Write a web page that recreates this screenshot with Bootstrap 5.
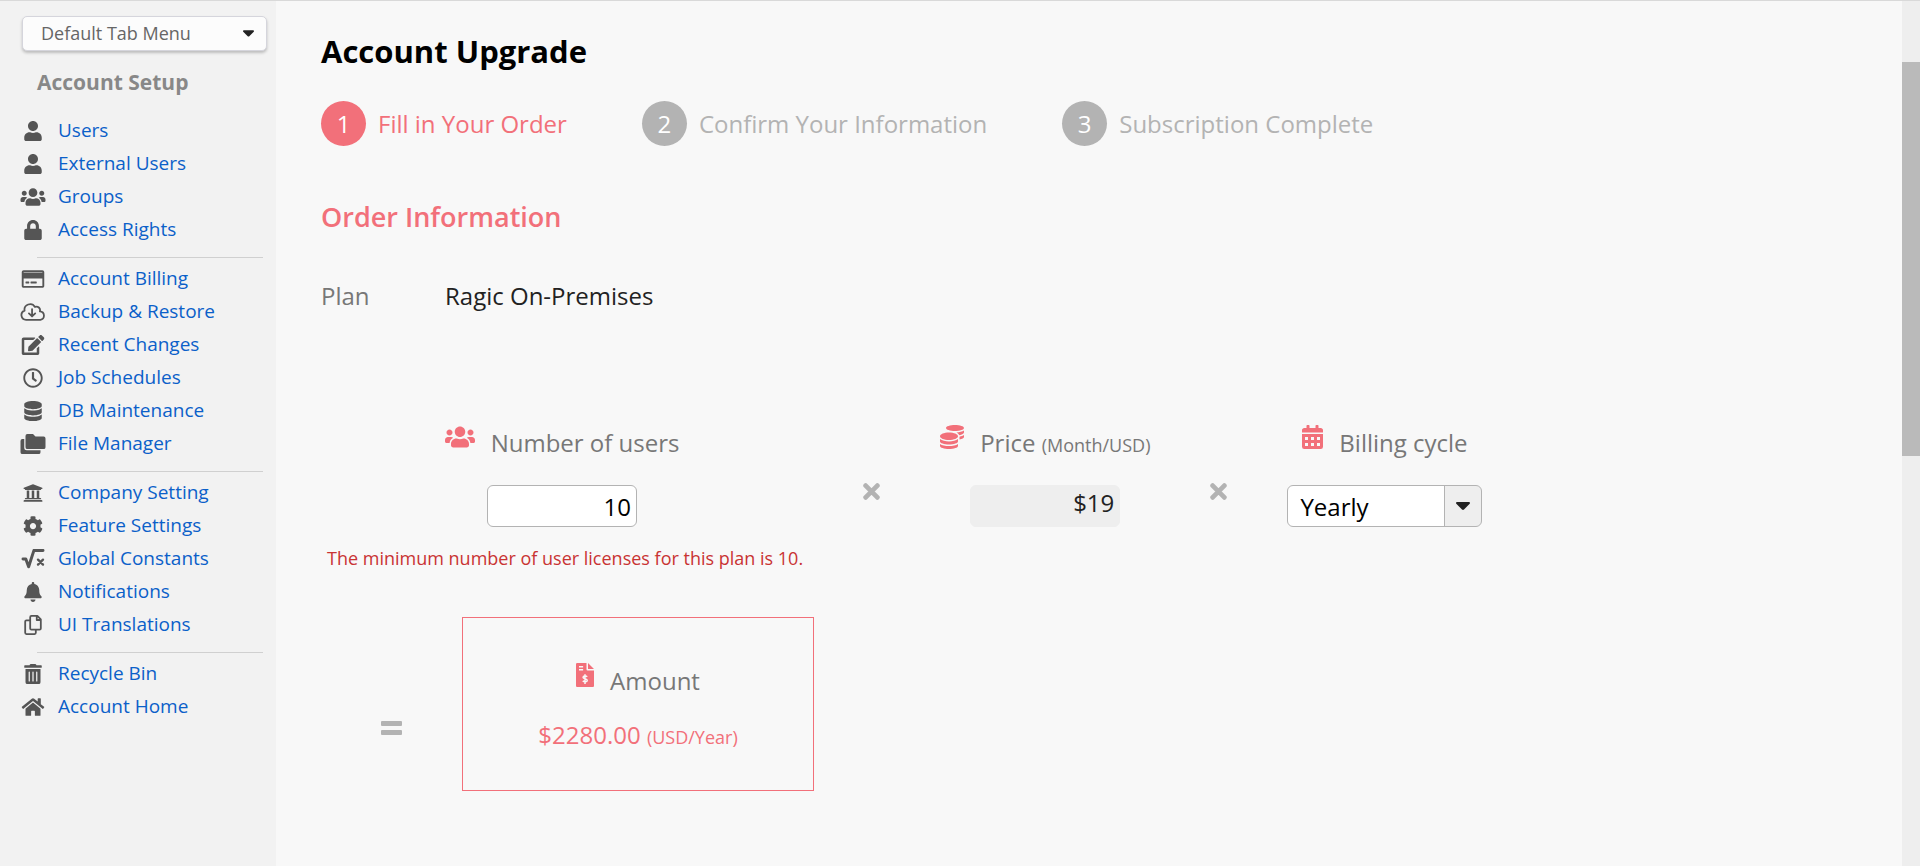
<!DOCTYPE html>
<html lang="en">
<head>
<meta charset="utf-8">
<meta name="viewport" content="width=device-width, initial-scale=1">
<title>Account Upgrade</title>
<link href="https://cdn.jsdelivr.net/npm/bootstrap@5.3.0/dist/css/bootstrap.min.css" rel="stylesheet">
<style>
  :root { --accent: #f2707a; --muted: #b3b3b3; }
  body { font-family: "Open Sans", "Noto Sans", sans-serif; font-weight: 400; font-size: 24px; line-height: 33px; background: #f8f8f8; color: #222; }
  svg { fill: currentColor; flex: none; }
  .page { min-height: 100vh; border-top: 1px solid #d9d9d9; }
  .side { width: 276px; background: #f2f2f2; padding: 15px 9px 0 22px; font-size: 19px; }
  .tab-menu { width: 245px; height: 35px; padding: 0 18px; font-size: 18px; line-height: 27px; font-weight: 400; color: #666; background: #fcfcfc; border: 1px solid #d5d5dc; border-radius: 5px; box-shadow: 0 2px 3px rgba(0,0,0,.22); appearance: none; }
  .overlay-arrow { position: absolute; pointer-events: none; color: #222; }
  .tab-wrap .overlay-arrow { right: 13px; top: 14px; }
  .side h2 { font-size: 21px; line-height: 33px; font-weight: 700; color: #888; margin: 15px 0 15px 15px; }
  .side hr { margin: 11px 4px 4px 15px; border-top: 1px solid #d0d0d0; opacity: 1; }
  .side a { color: #0b60c9; text-decoration: none; height: 33px; }
  .side .ico { width: 26px; height: 20px; color: #555; margin: 0 12px 0 -2px; }
  .content { padding: 30px 45px 40px; }
  h1 { font-size: 31px; line-height: 40px; font-weight: 700; color: #000; margin: 0 0 30px; }
  .step-list { gap: 20px 75px; color: var(--muted); }
  .step-dot { width: 45px; height: 45px; border-radius: 50%; background: var(--muted); color: #fff; }
  .current { color: var(--accent); }
  .current .step-dot { background: var(--accent); }
  .order-title { font-size: 27px; line-height: 40px; font-weight: 600; color: var(--accent); margin: 51px 0 42px; }
  .grey { color: #777; }
  .plan-label { width: 124px; }
  .formula { column-gap: 60px; margin-top: 113px; }
  .caption { font-size: 24px; color: #777; gap: 16px; }
  .caption svg { color: var(--accent); margin-bottom: 10px; }
  .unit { font-size: 18px; line-height: 1; }
  .value-box { width: 150px; height: 42px; margin-top: 26px; padding: 0 5px; font-size: 24px; text-align: right; border: 1px solid #b3b3b3; border-radius: 6px; background: #fff; color: #000; }
  .fixed-value { border-color: #eee; background: #eee; color: #222; line-height: 34px; display: block; }
  .cycle-wrap { margin-top: 26px; }
  .cycle { width: 195px; height: 42px; padding: 0 12px; font-size: 24px; color: #000; border: 1px solid #b3b3b3; border-radius: 6px; appearance: none; background: linear-gradient(#b3b3b3, #b3b3b3) right 36px top / 1px 100% no-repeat, linear-gradient(#eee, #eee) right / 36px 100% no-repeat #fff; }
  .cycle-wrap .overlay-arrow { right: 12px; top: 17px; }
  .hint { font-size: 18px; line-height: 25px; color: #c93333; padding: 19px 0 0 6px; }
  .operator { color: var(--muted); margin-top: 58px; }
  .amount-row { gap: 60px; padding-left: 60px; margin-top: 46px; }
  .amount { width: 352px; border: 1px solid var(--accent); padding: 45px 0 39px; }
  .amount .total { color: var(--accent); margin-top: 21px; }
  .equals { margin-top: 47px; color: var(--muted); }
  .scroll-track { width: 18px; background: #eee; padding-top: 61px; }
  .scroll-thumb { height: 394px; background: #bababa; }
</style>
</head>
<body>
<svg width="0" height="0" class="d-none" aria-hidden="true">
  <symbol id="user" viewBox="0 0 448 512"><path d="M224 256c70.700 0 128-57.300 128-128S294.700 0 224 0 96 57.300 96 128s57.300 128 128 128zm89.600 32h-16.700c-22.200 10.200-46.900 16-72.900 16s-50.600-5.800-72.900-16h-16.700C60.200 288 0 348.200 0 422.400V464c0 26.500 21.500 48 48 48h352c26.500 0 48-21.500 48-48v-41.600c0-74.200-60.200-134.400-134.400-134.400z"/></symbol>
  <symbol id="users" viewBox="0 0 640 512"><path d="M96 224c35.300 0 64-28.700 64-64s-28.700-64-64-64-64 28.700-64 64 28.700 64 64 64zm448 0c35.300 0 64-28.700 64-64s-28.700-64-64-64-64 28.700-64 64 28.700 64 64 64zm32 32h-64c-17.600 0-33.500 7.100-45.100 18.600 40.300 22.100 68.900 62 75.100 109.400h66c17.700 0 32-14.300 32-32v-32c0-35.300-28.700-64-64-64zm-256 0c61.900 0 112-50.100 112-112S381.900 32 320 32 208 82.100 208 144s50.100 112 112 112zm76.800 32h-8.300c-20.800 10-43.900 16-68.500 16s-47.600-6-68.500-16h-8.300C179.600 288 128 339.600 128 403.200V432c0 26.500 21.500 48 48 48h288c26.500 0 48-21.500 48-48v-28.800c0-63.600-51.600-115.200-115.200-115.200zm-223.700-13.400C161.500 263.100 145.600 256 128 256H64c-35.300 0-64 28.700-64 64v32c0 17.700 14.300 32 32 32h65.900c6.300-47.400 34.900-87.300 75.200-109.400z"/></symbol>
  <symbol id="lock" viewBox="0 0 448 512"><path d="M400 224h-24v-72C376 68.200 307.800 0 224 0S72 68.200 72 152v72H48c-26.500 0-48 21.500-48 48v192c0 26.500 21.500 48 48 48h352c26.500 0 48-21.500 48-48V272c0-26.500-21.500-48-48-48zm-104 0H152v-72c0-39.700 32.300-72 72-72s72 32.300 72 72v72z"/></symbol>
  <symbol id="card-ico" viewBox="0 0 576 512"><path d="M528 32H48C21.500 32 0 53.500 0 80v352c0 26.500 21.500 48 48 48h480c26.500 0 48-21.500 48-48V80c0-26.500-21.500-48-48-48zM54 80h468c3 0 6 3 6 6v10H48V86c0-3 3-6 6-6zm468 352H54c-3 0-6-3-6-6V240h480v186c0 3-3 6-6 6zM192 332v28c0 7-5 12-12 12h-72c-7 0-12-5-12-12v-28c0-7 5-12 12-12h72c7 0 12 5 12 12zm192 0v28c0 7-5 12-12 12H236c-7 0-12-5-12-12v-28c0-7 5-12 12-12h136c7 0 12 5 12 12z"/></symbol>
  <symbol id="cloud" viewBox="0 0 640 512"><path d="M144 456a120 120 0 0 1-40-233A144 144 0 0 1 370 126a92 92 0 0 1 126 112A110 110 0 0 1 510 456zM296 180v180M216 290l80 80 80-80" fill="none" stroke="currentColor" stroke-width="46" stroke-linecap="round" stroke-linejoin="round"/></symbol>
  <symbol id="edit" viewBox="0 0 576 512"><path d="M402.600 83.200l90.200 90.200c3.800 3.800 3.800 10 0 13.800L274.400 405.600l-92.800 10.300c-12.400 1.400-22.900-9.100-21.500-21.500l10.300-92.800L388.800 83.200c3.800-3.800 10-3.800 13.800 0zm162-22.900l-48.800-48.800c-15.200-15.200-39.900-15.200-55.200 0l-35.400 35.400c-3.800 3.800-3.800 10 0 13.800l90.200 90.200c3.800 3.800 10 3.800 13.800 0l35.400-35.400c15.200-15.300 15.200-40 0-55.200zM384 346.200V448H64V128h229.800c3.200 0 6.200-1.300 8.500-3.500l40-40c7.600-7.600 2.200-20.500-8.500-20.500H48C21.500 64 0 85.500 0 112v352c0 26.500 21.500 48 48 48h352c26.500 0 48-21.500 48-48V306.200c0-10.700-12.900-16-20.500-8.500l-40 40c-2.200 2.300-3.500 5.300-3.500 8.500z"/></symbol>
  <symbol id="clock" viewBox="0 0 512 512"><path d="M256 8C119 8 8 119 8 256s111 248 248 248 248-111 248-248S393 8 256 8zm0 448c-110.500 0-200-89.500-200-200S145.500 56 256 56s200 89.500 200 200-89.500 200-200 200zm61.800-104.400l-84.900-61.700c-3.100-2.300-4.900-5.900-4.900-9.700V116c0-6.600 5.400-12 12-12h32c6.600 0 12 5.400 12 12v141.700l66.800 48.600c5.400 3.900 6.500 11.400 2.600 16.800L334.600 349c-3.900 5.300-11.400 6.500-16.800 2.600z"/></symbol>
  <symbol id="database" viewBox="0 0 448 512"><path d="M448 80v48c0 44.200-100.300 80-224 80S0 172.200 0 128V80C0 35.800 100.300 0 224 0S448 35.800 448 80zM393.200 214.700c20.800-7.400 39.900-16.900 54.800-28.600V288c0 44.200-100.300 80-224 80S0 332.200 0 288V186.100c14.900 11.800 34 21.200 54.800 28.600C99.700 230.700 159.500 240 224 240s124.300-9.300 169.200-25.300zM0 346.100c14.900 11.800 34 21.200 54.800 28.600C99.700 390.700 159.500 400 224 400s124.300-9.300 169.200-25.300c20.800-7.400 39.900-16.900 54.800-28.600V432c0 44.200-100.300 80-224 80S0 476.200 0 432V346.100z"/></symbol>
  <symbol id="folders" viewBox="0 0 640 512"><path d="M176 0h144l64 64h208a48 48 0 0 1 48 48v224a48 48 0 0 1-48 48H176a48 48 0 0 1-48-48V48a48 48 0 0 1 48-48zM96 128v224a64 64 0 0 0 64 64h352v48a48 48 0 0 1-48 48H48a48 48 0 0 1-48-48V176a48 48 0 0 1 48-48z"/></symbol>
  <symbol id="bank" viewBox="0 0 512 512"><path d="M496 128v16a8 8 0 0 1-8 8h-24v12a12 12 0 0 1-12 12H60a12 12 0 0 1-12-12v-12H24a8 8 0 0 1-8-8v-16a8 8 0 0 1 5-7.400l232-88a8 8 0 0 1 6 0l232 88A8 8 0 0 1 496 128zM472 432H40a24 24 0 0 0-24 24v16a8 8 0 0 0 8 8h464a8 8 0 0 0 8-8v-16a24 24 0 0 0-24-24zM96 192v192H60a12 12 0 0 0-12 12v20h416v-20a12 12 0 0 0-12-12h-36V192h-64v192h-64V192h-64v192h-64V192z"/></symbol>
  <symbol id="gear" viewBox="0 0 512 512"><path d="M487.400 315.700l-42.600-24.600c4.300-23.200 4.300-47 0-70.200l42.600-24.600c4.900-2.800 7.100-8.600 5.500-14-11.100-35.600-30-67.800-54.700-94.600-3.800-4.100-10-5.100-14.800-2.300L380.800 110c-17.900-15.400-38.500-27.300-60.800-35.100V25.800c0-5.600-3.900-10.500-9.400-11.700-36.700-8.200-74.300-7.800-109.200 0-5.500 1.200-9.400 6.100-9.400 11.700V75c-22.200 7.900-42.800 19.800-60.800 35.100L88.700 85.500c-4.900-2.800-11-1.900-14.800 2.300-24.700 26.700-43.600 58.900-54.700 94.600-1.700 5.400.6 11.200 5.500 14L67.300 221c-4.300 23.200-4.300 47 0 70.200l-42.600 24.600c-4.900 2.800-7.100 8.600-5.500 14 11.100 35.600 30 67.800 54.700 94.600 3.800 4.100 10 5.100 14.800 2.300l42.600-24.600c17.900 15.400 38.500 27.300 60.800 35.100v49.200c0 5.600 3.900 10.500 9.400 11.700 36.700 8.200 74.300 7.800 109.200 0 5.500-1.200 9.400-6.100 9.400-11.700v-49.200c22.200-7.900 42.800-19.800 60.800-35.100l42.600 24.600c4.900 2.800 11 1.900 14.800-2.300 24.700-26.700 43.600-58.900 54.700-94.600 1.500-5.500-.7-11.300-5.600-14.100zM256 336c-44.100 0-80-35.900-80-80s35.900-80 80-80 80 35.900 80 80-35.900 80-80 80z"/></symbol>
  <symbol id="root" viewBox="0 0 576 512"><path d="M32 256h72l72 200L312 36h232" fill="none" stroke="currentColor" stroke-width="76" stroke-linecap="round" stroke-linejoin="round"/><path d="M416 272l128 128M544 272L416 400" fill="none" stroke="currentColor" stroke-width="60" stroke-linecap="round"/></symbol>
  <symbol id="bell" viewBox="0 0 448 512"><path d="M224 512c35 0 64-29 64-64H160c0 35 29 64 64 64zm215-150c-19-21-55-52-55-154 0-78-54-140-128-155V32c0-18-14-32-32-32s-32 14-32 32v21C118 68 64 130 64 208c0 102-36 133-55 154-6 6-9 14-9 22 0 16 13 32 32 32h384c19 0 32-16 32-32 0-8-3-16-9-22z"/></symbol>
  <symbol id="copy" viewBox="0 0 448 512"><path d="M184 24h152l88 88v232a32 32 0 0 1-32 32H184a32 32 0 0 1-32-32V56a32 32 0 0 1 32-32zM320 32v96h96M140 136H56a32 32 0 0 0-32 32v288a32 32 0 0 0 32 32h208a32 32 0 0 0 32-32v-70" fill="none" stroke="currentColor" stroke-width="46" stroke-linejoin="round"/></symbol>
  <symbol id="trash" viewBox="0 0 448 512"><path d="M32 464a48 48 0 0 0 48 48h288a48 48 0 0 0 48-48V128H32zm272-256a16 16 0 0 1 32 0v224a16 16 0 0 1-32 0zm-96 0a16 16 0 0 1 32 0v224a16 16 0 0 1-32 0zm-96 0a16 16 0 0 1 32 0v224a16 16 0 0 1-32 0zM432 32H312l-9-19A24 24 0 0 0 281 0H167a24 24 0 0 0-22 13L136 32H16A16 16 0 0 0 0 48v32a16 16 0 0 0 16 16h416a16 16 0 0 0 16-16V48a16 16 0 0 0-16-16z"/></symbol>
  <symbol id="home" viewBox="0 0 576 512"><path d="M280 148L96 300v164a16 16 0 0 0 16 16h112a16 16 0 0 0 16-16v-96a16 16 0 0 1 16-16h64a16 16 0 0 1 16 16v96a16 16 0 0 0 16 16h112a16 16 0 0 0 16-16V300L296 148a12 12 0 0 0-16 0zM572 251l-84-68V44a12 12 0 0 0-12-12h-56a12 12 0 0 0-12 12v73L318 43a48 48 0 0 0-61 0L4 251a12 12 0 0 0-1 17l25 31a12 12 0 0 0 17 2l235-194a12 12 0 0 1 16 0l235 194a12 12 0 0 0 17-2l25-31a12 12 0 0 0-1-17z"/></symbol>
  <symbol id="calendar" viewBox="0 0 448 512"><path fill-rule="evenodd" d="M0 192h448v272a48 48 0 0 1-48 48H48a48 48 0 0 1-48-48zm64 64v64h64v-64zm128 0v64h64v-64zm128 0v64h64v-64zM64 384v64h64v-64zm128 0v64h64v-64zm128 0v64h64v-64zM400 64h-48V16c0-9-7-16-16-16h-32c-9 0-16 7-16 16v48H160V16c0-9-7-16-16-16h-32c-9 0-16 7-16 16v48H48C21 64 0 85 0 112v48h448v-48c0-27-21-48-48-48z"/></symbol>
  <symbol id="coins" viewBox="0 0 512 512"><path d="M0 405v43c0 35 86 64 192 64s192-29 192-64v-43c-41 29-117 43-192 43S41 434 0 405zm320-277c106 0 192-29 192-64S426 0 320 0 128 29 128 64s86 64 192 64zM0 300v52c0 35 86 64 192 64s192-29 192-64v-52c-41 34-117 52-192 52S41 334 0 300zm416 11c57-11 96-32 96-55v-43c-23 16-57 28-96 35zM192 160C86 160 0 196 0 240s86 80 192 80 192-36 192-80-86-80-192-80zm219 56c60-11 101-32 101-56v-43c-36 25-98 39-163 42 30 15 53 34 62 57z"/></symbol>
  <symbol id="invoice" viewBox="0 0 384 512"><path fill-rule="evenodd" d="M224 136V0H24A24 24 0 0 0 0 24v464a24 24 0 0 0 24 24h336a24 24 0 0 0 24-24V160H248a24 24 0 0 1-24-24zM64 64h88v32H64zm0 64h88v32H64zM256 0v128h128z"/><path d="M240 292c-18-16-86-22-90 14-4 40 92 22 90 66-2 36-70 34-96 10M192 240v208" fill="none" stroke="#f8f8f8" stroke-width="32"/></symbol>
  <symbol id="times" viewBox="0 0 16 16"><path d="M2.500 2.500l11 11m0-11l-11 11" stroke="currentColor" stroke-width="4.500" stroke-linecap="round"/></symbol>
  <symbol id="caret" viewBox="0 0 14 8"><path d="M1 0h12a1 1 0 0 1 .7 1.700L8 7.500a1.500 1.500 0 0 1-2 0L.3 1.700A1 1 0 0 1 1 0z"/></symbol>
</svg>

<div class="page d-flex">
  <nav class="side flex-shrink-0" aria-label="Account setup">
    <div class="tab-wrap position-relative d-flex">
      <select class="tab-menu" aria-label="Tab menu"><option>Default Tab Menu</option></select>
      <svg class="overlay-arrow" width="11" height="7"><use href="#caret"/></svg>
    </div>
    <h2>Account Setup</h2>
    <ul class="list-unstyled m-0">
      <li><a href="#" class="d-flex align-items-center"><svg class="ico"><use href="#user"/></svg>Users</a></li>
      <li><a href="#" class="d-flex align-items-center"><svg class="ico"><use href="#user"/></svg>External Users</a></li>
      <li><a href="#" class="d-flex align-items-center"><svg class="ico"><use href="#users"/></svg>Groups</a></li>
      <li><a href="#" class="d-flex align-items-center"><svg class="ico"><use href="#lock"/></svg>Access Rights</a></li>
    </ul>
    <hr>
    <ul class="list-unstyled m-0">
      <li><a href="#" class="d-flex align-items-center"><svg class="ico"><use href="#card-ico"/></svg>Account Billing</a></li>
      <li><a href="#" class="d-flex align-items-center"><svg class="ico"><use href="#cloud"/></svg>Backup &amp; Restore</a></li>
      <li><a href="#" class="d-flex align-items-center"><svg class="ico"><use href="#edit"/></svg>Recent Changes</a></li>
      <li><a href="#" class="d-flex align-items-center"><svg class="ico"><use href="#clock"/></svg>Job Schedules</a></li>
      <li><a href="#" class="d-flex align-items-center"><svg class="ico"><use href="#database"/></svg>DB Maintenance</a></li>
      <li><a href="#" class="d-flex align-items-center"><svg class="ico"><use href="#folders"/></svg>File Manager</a></li>
    </ul>
    <hr>
    <ul class="list-unstyled m-0">
      <li><a href="#" class="d-flex align-items-center"><svg class="ico"><use href="#bank"/></svg>Company Setting</a></li>
      <li><a href="#" class="d-flex align-items-center"><svg class="ico"><use href="#gear"/></svg>Feature Settings</a></li>
      <li><a href="#" class="d-flex align-items-center"><svg class="ico"><use href="#root"/></svg>Global Constants</a></li>
      <li><a href="#" class="d-flex align-items-center"><svg class="ico"><use href="#bell"/></svg>Notifications</a></li>
      <li><a href="#" class="d-flex align-items-center"><svg class="ico"><use href="#copy"/></svg>UI Translations</a></li>
    </ul>
    <hr>
    <ul class="list-unstyled m-0">
      <li><a href="#" class="d-flex align-items-center"><svg class="ico"><use href="#trash"/></svg>Recycle Bin</a></li>
      <li><a href="#" class="d-flex align-items-center"><svg class="ico"><use href="#home"/></svg>Account Home</a></li>
    </ul>
  </nav>

  <main class="content flex-grow-1">
    <h1>Account Upgrade</h1>
    <ol class="step-list list-unstyled d-flex flex-wrap m-0">
      <li class="current d-flex align-items-center"><span class="step-dot d-flex align-items-center justify-content-center me-2">1</span><span class="ps-1">Fill in Your Order</span></li>
      <li class="d-flex align-items-center"><span class="step-dot d-flex align-items-center justify-content-center me-2">2</span><span class="ps-1">Confirm Your Information</span></li>
      <li class="d-flex align-items-center"><span class="step-dot d-flex align-items-center justify-content-center me-2">3</span><span class="ps-1">Subscription Complete</span></li>
    </ol>
    <h2 class="order-title">Order Information</h2>
    <div class="d-flex"><span class="plan-label grey">Plan</span><span>Ragic On-Premises</span></div>

    <form>
      <div class="formula d-flex align-items-start">
        <div class="d-flex flex-column align-items-center">
          <label class="caption d-flex align-items-center" for="seats"><svg width="30" height="24"><use href="#users"/></svg>Number of users</label>
          <input id="seats" class="value-box" type="text" value="10">
          <div class="hint">The minimum number of user licenses for this plan is 10.</div>
        </div>
        <svg class="operator" width="17" height="17"><use href="#times"/></svg>
        <div class="d-flex flex-column align-items-center">
          <label class="caption d-flex align-items-center" for="price"><svg width="24" height="24"><use href="#coins"/></svg><span>Price <span class="unit">(Month/USD)</span></span></label>
          <output id="price" class="value-box fixed-value">$19</output>
        </div>
        <svg class="operator" width="17" height="17"><use href="#times"/></svg>
        <div class="d-flex flex-column align-items-center">
          <label class="caption d-flex align-items-center" for="cycle"><svg width="21" height="24"><use href="#calendar"/></svg>Billing cycle</label>
          <div class="cycle-wrap position-relative d-flex">
            <select id="cycle" class="cycle"><option>Yearly</option><option>Monthly</option></select>
            <svg class="overlay-arrow" width="14" height="8"><use href="#caret"/></svg>
          </div>
        </div>
      </div>

      <div class="amount-row d-flex align-items-center">
        <svg class="equals" width="21" height="14" viewBox="0 0 21 14"><rect width="21" height="5" rx="1"/><rect y="9" width="21" height="5" rx="1"/></svg>
        <div class="amount text-center">
          <div class="caption d-flex align-items-center justify-content-center"><svg width="18" height="24"><use href="#invoice"/></svg>Amount</div>
          <div class="total">$2280.00 <span class="unit">(USD/Year)</span></div>
        </div>
      </div>
    </form>
  </main>
  <div class="scroll-track flex-shrink-0"><div class="scroll-thumb"></div></div>
</div>
<script src="https://cdn.jsdelivr.net/npm/bootstrap@5.3.0/dist/js/bootstrap.bundle.min.js"></script>
</body>
</html>
